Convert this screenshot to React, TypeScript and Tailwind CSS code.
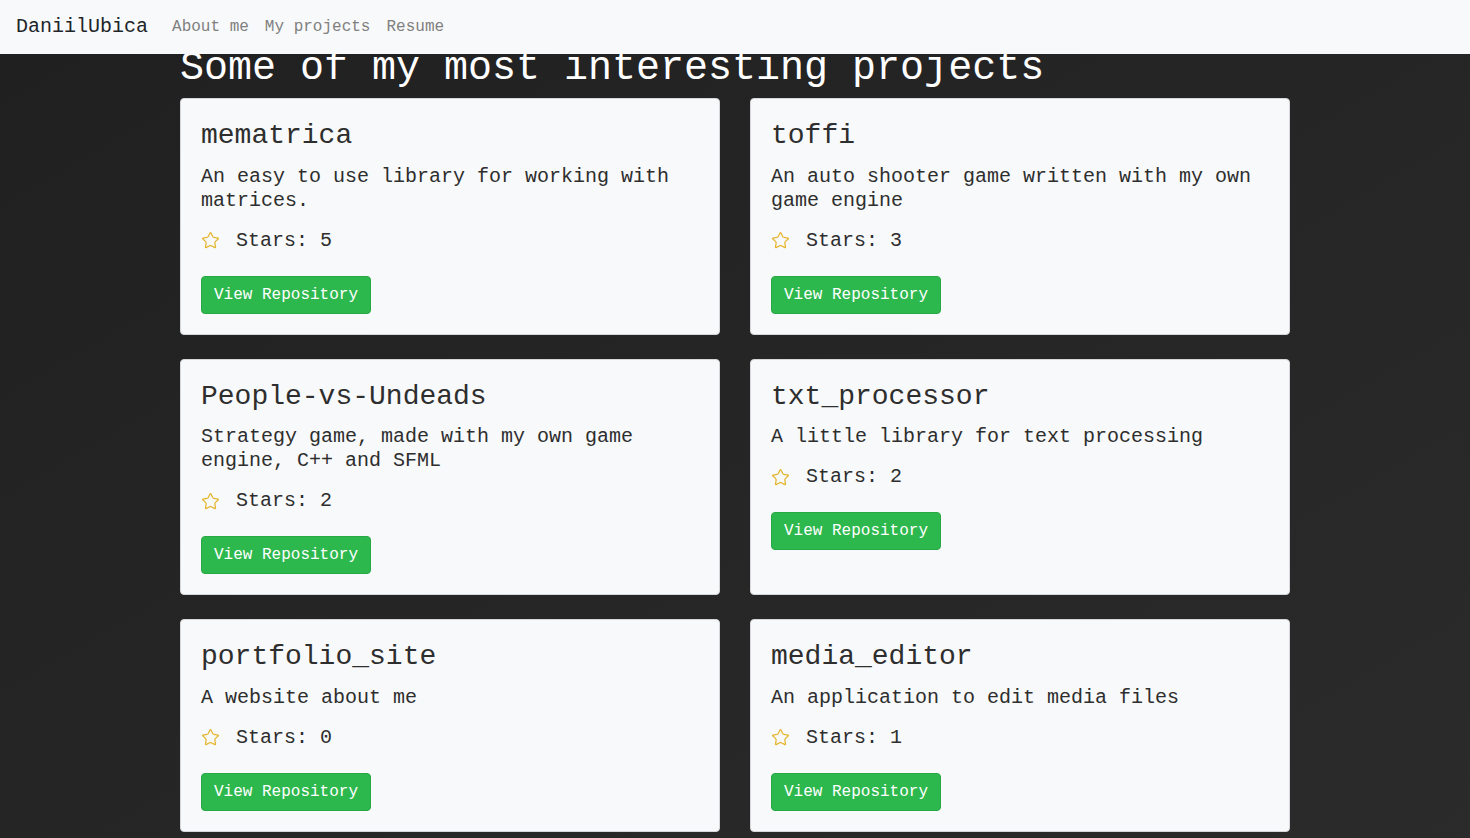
import React from "react";
import { Star } from "lucide-react";

const PROJECTS = [
  { name: "mematrica", desc: "An easy to use library for working with matrices.", stars: 5 },
  { name: "toffi", desc: "An auto shooter game written with my own game engine", stars: 3 },
  { name: "People-vs-Undeads", desc: "Strategy game, made with my own game engine, C++ and SFML", stars: 2 },
  { name: "txt_processor", desc: "A little library for text processing", stars: 2 },
  { name: "portfolio_site", desc: "A website about me", stars: 0 },
  { name: "media_editor", desc: "An application to edit media files", stars: 1 },
];

const mono = "font-['Liberation_Mono','Courier_New',monospace]";

export default function App() {
  return (
    <div className={`min-h-screen bg-linear-to-br from-[#202020] to-[#2b2b2b] ${mono}`}>
      {/* Navbar */}
      <nav className="relative z-10 flex h-[54px] items-center bg-[#f8f9fa] px-4">
        <span className="mr-6 text-[20px] text-[#212529]">DaniilUbica</span>
        <div className="flex gap-4 text-[16px] text-[#808080]">
          <span>About me</span>
          <span>My projects</span>
          <span>Resume</span>
        </div>
      </nav>

      <div className="mx-auto w-[1110px]">
        <h1 className="-mt-[9px] mb-[5px] text-[40px] leading-[48px] text-white">
          Some of my most interesting projects
        </h1>

        <div className="grid grid-cols-2 gap-x-[30px] gap-y-6 pb-6">
          {PROJECTS.map((p) => (
            <div
              key={p.name}
              className="rounded-[4px] border border-[#d5d7da] bg-[#f8f9fa] p-5 text-[#2e2e2e]"
            >
              <h3 className="mb-3 text-[28px] leading-[33.6px]">{p.name}</h3>
              <p className="mb-4 text-[20px] leading-[24px]">{p.desc}</p>
              <div className="mb-[23px] flex items-center gap-4 text-[20px] leading-[24px]">
                <Star className="h-[19px] w-[19px] text-[#e5b630]" strokeWidth={1.6} />
                <span>Stars: {p.stars}</span>
              </div>
              <button className="rounded-[4px] border border-[#28a745] bg-[#2db84e] px-3 py-[6px] text-[16px] leading-[24px] text-white">
                View Repository
              </button>
            </div>
          ))}
        </div>
      </div>
    </div>
  );
}
